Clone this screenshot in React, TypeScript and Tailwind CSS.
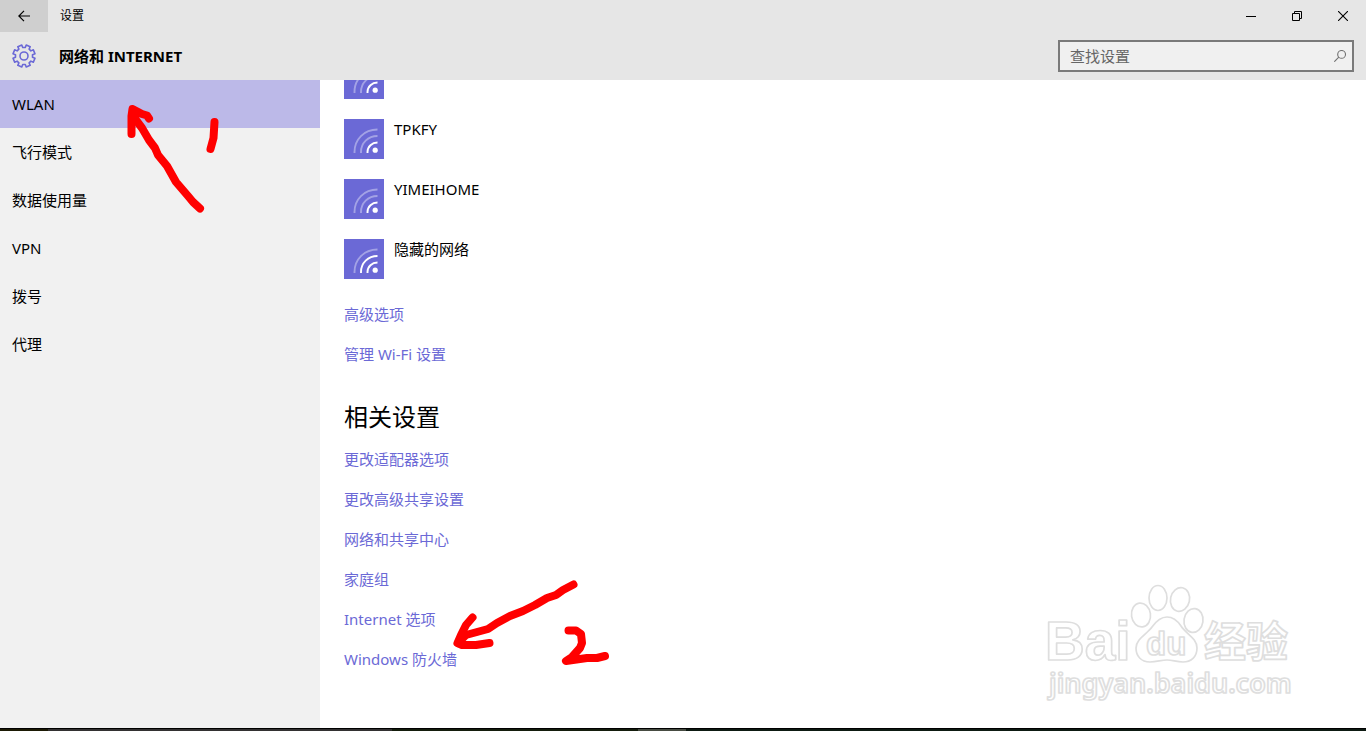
import React from "react";

const navItems = ["WLAN", "飞行模式", "数据使用量", "VPN", "拨号", "代理"];

type Network = { name: string; strength: 1 | 2 };
const networks: Network[] = [
  { name: "", strength: 1 },
  { name: "TPKFY", strength: 1 },
  { name: "YIMEIHOME", strength: 1 },
  { name: "隐藏的网络", strength: 2 },
];

const wlanLinks = ["高级选项", "管理 Wi-Fi 设置"];
const relatedLinks = [
  "更改适配器选项",
  "更改高级共享设置",
  "网络和共享中心",
  "家庭组",
  "Internet 选项",
  "Windows 防火墙",
];

function gearOutline() {
  const pts: string[] = [];
  for (let i = 0; i < 8; i++) {
    const at = (r: number, deg: number) => {
      const a = ((i * 45 + 22.5 + deg) * Math.PI) / 180;
      return `${(r * Math.cos(a)).toFixed(2)} ${(r * Math.sin(a)).toFixed(2)}`;
    };
    pts.push(`${i === 0 ? "M" : "L"}${at(8.6, -14)}L${at(11.2, -11)}L${at(11.2, 11)}L${at(8.6, 14)}`);
  }
  return pts.join("") + "Z";
}

function GearIcon() {
  return (
    <svg className="size-6" viewBox="-12 -12 24 24" fill="none" stroke="#6b69d6" strokeWidth="1.6" strokeLinejoin="round" aria-hidden="true">
      <path d={gearOutline()} />
      <circle r="4" />
    </svg>
  );
}

function WifiTile({ strength }: { strength: 1 | 2 }) {
  return (
    <svg className="size-10 shrink-0 bg-[#6b69d6]" viewBox="0 0 40 40" fill="none" stroke="#fff" strokeWidth="1.9" aria-hidden="true">
      <path d="M10.500 34V33C10.500 20.500 20 10.500 33.500 10.500" opacity="0.38" />
      <path d="M17 34V33C17 24 24 17 33.500 17" opacity={strength === 2 ? 1 : 0.38} />
      <path d="M23.500 34V33C23.500 27.500 28 23.500 33.500 23.500" />
      <circle cx="31.200" cy="31.200" r="2.600" fill="#fff" stroke="none" />
    </svg>
  );
}

function LinkList({ items }: { items: string[] }) {
  return (
    <ul>
      {items.map((t) => (
        <li key={t} className="flex h-10 items-center">
          <a href="#" className="text-[#6b69d6]">{t}</a>
        </li>
      ))}
    </ul>
  );
}

function Annotations() {
  return (
    <>
      <svg className="pointer-events-none absolute left-[110px] top-[90px] h-[130px] w-[120px]" viewBox="110 90 120 130" fill="none" stroke="#f00" strokeWidth="8" strokeLinecap="round" strokeLinejoin="round" aria-hidden="true">
        <path d="M131.500 134V116L132.500 109L142 114L147 115.500L149 118.500" />
        <path d="M133 110L136 120L142 128L149 140L155 148L158 155L167 166L176 182L188 196L193 202L200 208.500" />
        <path d="M214.500 122L213.500 138L210.500 149" />
      </svg>
      <svg className="pointer-events-none absolute left-[440px] top-[570px] h-[110px] w-[180px]" viewBox="440 570 180 110" fill="none" stroke="#f00" strokeWidth="8" strokeLinecap="round" strokeLinejoin="round" aria-hidden="true">
        <path d="M573.500 584.500L563 590L556 595L547 598L535 605L523 611L510 616L497 623L488 629L477 632L466 635L458 643" />
        <path d="M472.500 617.500L466 625L461 635L457.500 643L462 645L476 645L489.500 643" />
        <path d="M568.500 630.500H576L581 634L582 643L580 648L572 657L566 661L587 658L597 658L605 656" />
      </svg>
    </>
  );
}

function Watermark() {
  return (
    <svg className="pointer-events-none absolute bottom-[16px] right-[56px] h-[145px] w-[280px]" viewBox="0 0 280 145" fill="#fff" stroke="#dedede" strokeWidth="1.700" strokeLinejoin="round" aria-hidden="true">
      <text x="15" y="90" fontSize="55" fontWeight="700" fontFamily="Liberation Sans, sans-serif">Bai</text>
      <ellipse cx="128" cy="28" rx="9" ry="12.500" />
      <ellipse cx="150" cy="29.500" rx="9.500" ry="12" transform="rotate(12 150 29.500)" />
      <ellipse cx="111" cy="45" rx="9.500" ry="12" transform="rotate(-8 111 45)" />
      <ellipse cx="163.500" cy="50.500" rx="9.500" ry="12" transform="rotate(8 163.500 50.500)" />
      <path d="M137 47C143 47 147 50 151 56C156 64 167 68 167 78C167 87 161 92 153 92C146 92 143 90 137 90C131 90 127 92 120 92C111 92 106 86 106 78C106 69 117 64 122 57C127 50 131 47 137 47Z" />
      <text x="116" y="85" fontSize="33" fontWeight="700" fontFamily="Liberation Sans, sans-serif">du</text>
      <text x="174" y="87" fontSize="42" fontWeight="700" fontFamily="Noto Sans CJK SC, sans-serif">经验</text>
      <text x="19" y="123" fontSize="27" fontWeight="600" fontFamily="Noto Sans, sans-serif">jingyan.baidu.com</text>
    </svg>
  );
}

export default function App() {
  return (
    <div className="relative flex h-screen flex-col overflow-hidden bg-white font-['Noto_Sans','Noto_Sans_CJK_SC',sans-serif] text-[15px] leading-5 text-black">
      <header className="shrink-0 bg-[#e6e6e6]">
        <div className="flex h-8 items-center">
          <button aria-label="返回" className="flex h-8 w-12 items-center justify-center bg-[#cfcfcf]">
            <svg className="h-3 w-3" viewBox="0 0 12 12" fill="none" stroke="#000" strokeWidth="1.200" aria-hidden="true">
              <path d="M12 6H.8M6 .8L.8 6L6 11.200" />
            </svg>
          </button>
          <span className="ml-3 flex-1 text-xs">设置</span>
          <button aria-label="最小化" className="flex h-8 w-[46px] items-center justify-center">
            <svg className="size-[10px]" viewBox="0 0 10 10" stroke="#000" aria-hidden="true"><path d="M0 5.500H10" /></svg>
          </button>
          <button aria-label="还原" className="flex h-8 w-[46px] items-center justify-center">
            <svg className="size-[10px]" viewBox="0 0 10 10" fill="none" stroke="#000" aria-hidden="true"><path d="M.5 2.500H7.500V9.500H.5ZM2.500 2.500V.5H9.500V7.500H7.500" /></svg>
          </button>
          <button aria-label="关闭" className="flex h-8 w-[46px] items-center justify-center">
            <svg className="size-[10px]" viewBox="0 0 10 10" stroke="#000" strokeWidth="1.100" aria-hidden="true"><path d="M0 0L10 10M10 0L0 10" /></svg>
          </button>
        </div>
        <div className="flex h-12 items-center px-3">
          <GearIcon />
          <h1 className="ml-[23px] flex-1 font-bold">网络和 INTERNET</h1>
          <label className="flex h-8 w-[296px] items-center border-2 border-[#7a7a7a] bg-[#f0f0f0] pl-[10px] pr-[6px]">
            <input type="text" aria-label="查找设置" placeholder="查找设置" className="h-5 min-w-0 flex-1 bg-transparent outline-none placeholder:text-[#666]" />
            <svg className="size-3" viewBox="0 0 12 12" fill="none" stroke="#707070" strokeWidth="1.100" aria-hidden="true">
              <circle cx="7.600" cy="4.400" r="3.900" />
              <path d="M4.800 7.200L.3 11.700" />
            </svg>
          </label>
        </div>
      </header>

      <div className="flex min-h-0 flex-1">
        <nav className="w-80 shrink-0 bg-[#f1f1f1]">
          {navItems.map((t, i) => (
            <a key={t} href="#" className={i === 0 ? "flex h-12 items-center bg-[#bcb9e8] px-3" : "flex h-12 items-center px-3"}>{t}</a>
          ))}
        </nav>
        <main className="min-w-0 flex-1 overflow-hidden px-6">
          <ul className="-mt-[21px] flex flex-col gap-5">
            {networks.map((n, i) => (
              <li key={i} className="flex h-10 gap-[10px]">
                <WifiTile strength={n.strength} />
                <span>{n.name}</span>
              </li>
            ))}
          </ul>
          <div className="mt-[15px]"><LinkList items={wlanLinks} /></div>
          <h2 className="mb-[6px] mt-[27px] text-2xl">相关设置</h2>
          <LinkList items={relatedLinks} />
        </main>
      </div>

      <footer className="flex h-[3px] shrink-0 border-t border-black bg-[#0d1a12]">
        <div className="w-12 bg-[#1c1a04]" />
        <div className="w-[344px] bg-[#333132]" />
        <div className="w-[246px] bg-[#141d0c]" />
        <div className="w-12 bg-[#474c42]" />
      </footer>

      <Annotations />
      <Watermark />
    </div>
  );
}
